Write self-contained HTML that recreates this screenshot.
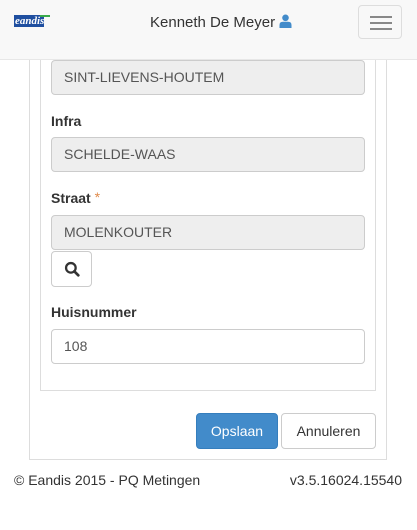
<!DOCTYPE html>
<html><head><style>
*{box-sizing:border-box;margin:0;padding:0}
body{width:417px;height:530px;background:#fff;font-family:"Liberation Sans",sans-serif;color:#333;position:relative;overflow:hidden;font-size:14px}
.hdr{position:absolute;left:0;top:0;width:417px;height:60px;background:#f8f8f8;border-bottom:1px solid #e7e7e7;z-index:2}
.name{position:absolute;left:150px;top:14px;font-size:15px;color:#333}
.tog{position:absolute;left:358px;top:5px;width:44px;height:34px;border:1px solid #ddd;border-radius:4px}
.tog i{position:absolute;left:11px;width:22px;height:2px;background:#888}
.outer{position:absolute;left:29px;top:40px;width:358px;height:420px;border:1px solid #ddd}
.inner{position:absolute;left:40px;top:40px;width:336px;height:351px;border:1px solid #ddd}
.inp{position:absolute;left:51px;width:314px;height:35px;border:1px solid #ccc;border-radius:4px;padding:0 12px;line-height:33px;font-size:14px;color:#555}
.ro{background:#eee}
.lbl{position:absolute;left:51px;font-weight:bold;font-size:14px;color:#333}
.btn{position:absolute;height:36px;border-radius:4px;line-height:34px;text-align:center;font-size:14px}
.ft{position:absolute;top:472px;font-size:14px;color:#333}
</style></head><body>
<div class="hdr">
 <div style="position:absolute;left:14px;top:15px;width:30px;height:12px;background:#1f4fa0;color:#fff;font:italic bold 11px 'Liberation Serif',serif;line-height:12px;padding-left:1px">eandis</div>
 <div style="position:absolute;left:40px;top:15px;width:10px;height:2px;background:#3aaa4a"></div>
 <div class="name">Kenneth De Meyer <svg width="13" height="14" viewBox="0 0 13 14" style="vertical-align:-1px"><circle cx="6.5" cy="3.8" r="3.3" fill="#428bca"/><path d="M0.5 14 L0.5 11 Q0.5 7.8 4 7.8 L9 7.8 Q12.5 7.8 12.5 11 L12.5 14Z" fill="#428bca"/></svg></div>
 <div class="tog"><i style="top:10px"></i><i style="top:16px"></i><i style="top:22px"></i></div>
</div>
<div class="outer"></div>
<div class="inner"></div>
<div class="inp ro" style="top:60px">SINT-LIEVENS-HOUTEM</div>
<div class="lbl" style="top:113px">Infra</div>
<div class="inp ro" style="top:137px">SCHELDE-WAAS</div>
<div class="lbl" style="top:190px">Straat <span style="color:#e08a4a;font-weight:normal;position:relative;top:-1px">*</span></div>
<div class="inp ro" style="top:215px">MOLENKOUTER</div>
<div class="btn" style="left:51px;top:251px;width:41px;height:36px;border:1px solid #ccc"><svg width="16" height="16" viewBox="0 0 14 14" style="margin-top:9px"><circle cx="6" cy="6" r="4.2" fill="none" stroke="#333" stroke-width="2"/><path d="M9 9 L12.5 12.5" stroke="#333" stroke-width="2.4" stroke-linecap="round"/></svg></div>
<div class="lbl" style="top:304px">Huisnummer</div>
<div class="inp" style="top:329px;color:#555">108</div>
<div class="btn" style="left:196px;top:413px;width:82px;background:#428bca;border:1px solid #357ebd;color:#fff">Opslaan</div>
<div class="btn" style="left:281px;top:413px;width:95px;border:1px solid #ccc;color:#333">Annuleren</div>
<div class="ft" style="left:14px">© Eandis 2015 - PQ Metingen</div>
<div class="ft" style="right:15px">v3.5.16024.15540</div>
</body></html>
